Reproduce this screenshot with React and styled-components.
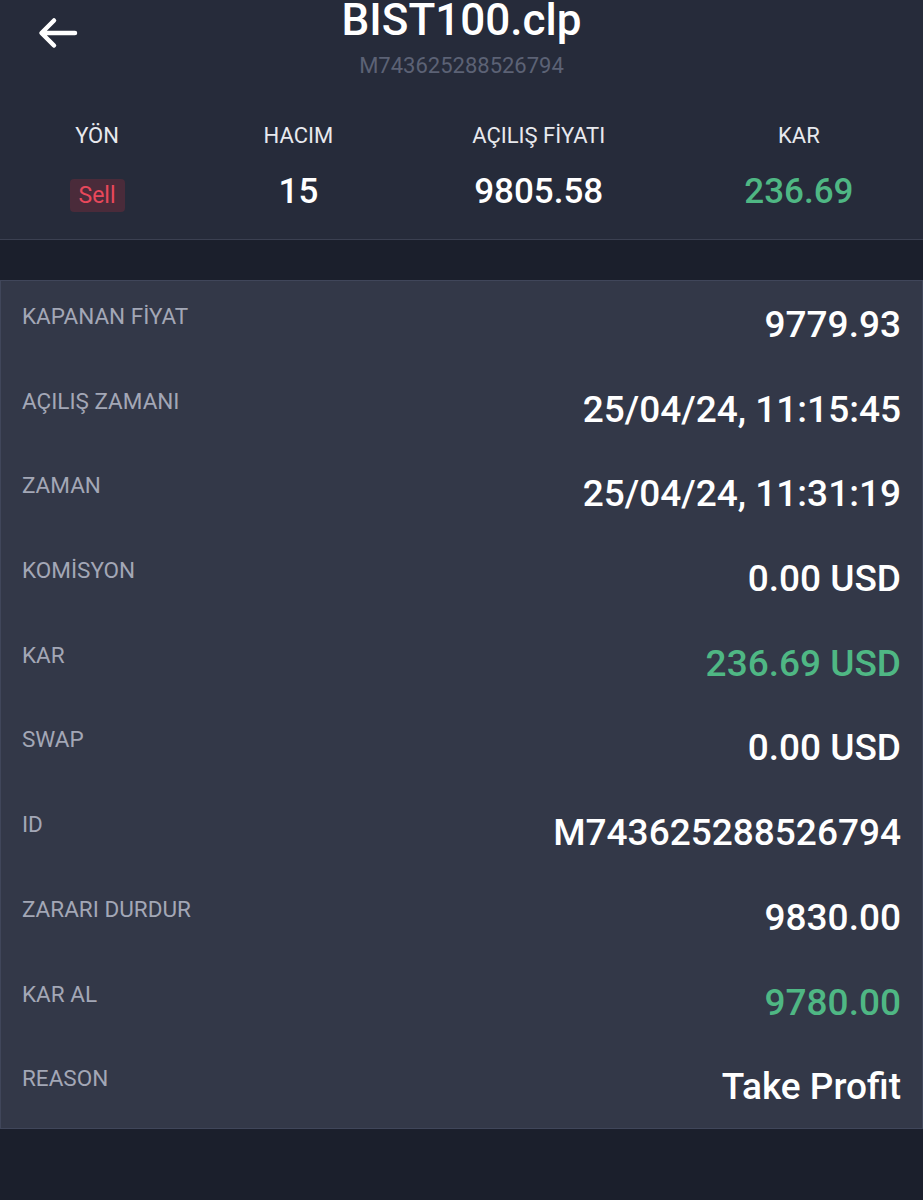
import React from "react";
import styled, { createGlobalStyle } from "styled-components";

const GlobalStyle = createGlobalStyle`
  body {
    margin: 0;
    background: #1b1f2c;
    font-family: Roboto, "Noto Sans", sans-serif;
    color: #fff;
  }
`;

const Page = styled.div`
  width: 923px;
  min-height: 1200px;
  background: #1b1f2c;
  overflow: hidden;
`;

const Header = styled.header`
  background: #262b3a;
  height: 240px;
  box-sizing: border-box;
  border-bottom: 1px solid #3b4051;
`;

const TopRow = styled.div`
  display: grid;
  grid-template-columns: 1fr auto 1fr;
`;

const BackButton = styled.button`
  justify-self: start;
  align-self: start;
  background: none;
  border: 0;
  padding: 17px 0 0 37px;
  cursor: pointer;
  line-height: 0;
`;

const TitleBlock = styled.div`
  display: flex;
  flex-direction: column;
  align-items: center;
`;

const Title = styled.h1`
  margin: 0;
  font-size: 44px;
  line-height: 40px;
  font-weight: 500;
`;

const Subtitle = styled.div`
  margin-top: 13px;
  font-size: 22px;
  line-height: 26px;
  color: #5c6275;
`;

const Stats = styled.div`
  display: flex;
  justify-content: space-around;
  margin-top: 44px;
`;

const Stat = styled.div`
  display: flex;
  flex-direction: column;
  align-items: center;
  gap: 23px;
`;

const StatLabel = styled.div`
  font-size: 22px;
  line-height: 26px;
  color: #e8e9ee;
`;

const StatValue = styled.div`
  font-size: 35px;
  line-height: 40px;
  height: 40px;
  font-weight: 500;
  color: ${(p) => (p.$green ? "#4fb784" : "#ffffff")};
  display: flex;
  align-items: center;
`;

const SideBadge = styled.span`
  display: inline-block;
  margin-top: 6px;
  padding: 0 9px;
  height: 33px;
  line-height: 33px;
  border-radius: 4px;
  background: #4a2b3a;
  color: #e8485b;
  font-size: 23px;
  font-weight: 400;
`;

const Card = styled.section`
  margin-top: 40px;
  background: #333848;
  border: 1px solid #40465a;
`;

const Row = styled.div`
  display: flex;
  justify-content: space-between;
  align-items: flex-start;
  height: 84.7px;
  box-sizing: border-box;
  padding: 22px 21px 0 21px;
`;

const Label = styled.div`
  font-size: 22.5px;
  line-height: 26px;
  color: #a3a7b6;
`;

const Value = styled.div`
  margin-top: 1px;
  font-size: 37px;
  line-height: 42px;
  font-weight: 500;
  color: ${(p) => (p.$green ? "#4fb784" : "#ffffff")};
`;

const rows = [
  { label: "KAPANAN FİYAT", value: "9779.93" },
  { label: "AÇILIŞ ZAMANI", value: "25/04/24, 11:15:45" },
  { label: "ZAMAN", value: "25/04/24, 11:31:19" },
  { label: "KOMİSYON", value: "0.00 USD" },
  { label: "KAR", value: "236.69 USD", green: true },
  { label: "SWAP", value: "0.00 USD" },
  { label: "ID", value: "M743625288526794" },
  { label: "ZARARI DURDUR", value: "9830.00" },
  { label: "KAR AL", value: "9780.00", green: true },
  { label: "REASON", value: "Take Profit" },
];

function BackArrow() {
  return (
    <svg width="42" height="32" viewBox="0 0 42 32" fill="none">
      <path
        d="M38 16H5M17 3.5L4.5 16 17 28.5"
        stroke="#fff"
        strokeWidth="4.5"
        strokeLinecap="round"
        strokeLinejoin="round"
      />
    </svg>
  );
}

export default function App() {
  return (
    <Page>
      <GlobalStyle />
      <Header>
        <TopRow>
          <BackButton aria-label="Geri">
            <BackArrow />
          </BackButton>
          <TitleBlock>
            <Title>BIST100.clp</Title>
            <Subtitle>M743625288526794</Subtitle>
          </TitleBlock>
          <div />
        </TopRow>
        <Stats>
          <Stat>
            <StatLabel>YÖN</StatLabel>
            <StatValue>
              <SideBadge>Sell</SideBadge>
            </StatValue>
          </Stat>
          <Stat>
            <StatLabel>HACIM</StatLabel>
            <StatValue>15</StatValue>
          </Stat>
          <Stat>
            <StatLabel>AÇILIŞ FİYATI</StatLabel>
            <StatValue>9805.58</StatValue>
          </Stat>
          <Stat>
            <StatLabel>KAR</StatLabel>
            <StatValue $green>236.69</StatValue>
          </Stat>
        </Stats>
      </Header>
      <Card>
        {rows.map((r) => (
          <Row key={r.label}>
            <Label>{r.label}</Label>
            <Value $green={r.green}>{r.value}</Value>
          </Row>
        ))}
      </Card>
    </Page>
  );
}
